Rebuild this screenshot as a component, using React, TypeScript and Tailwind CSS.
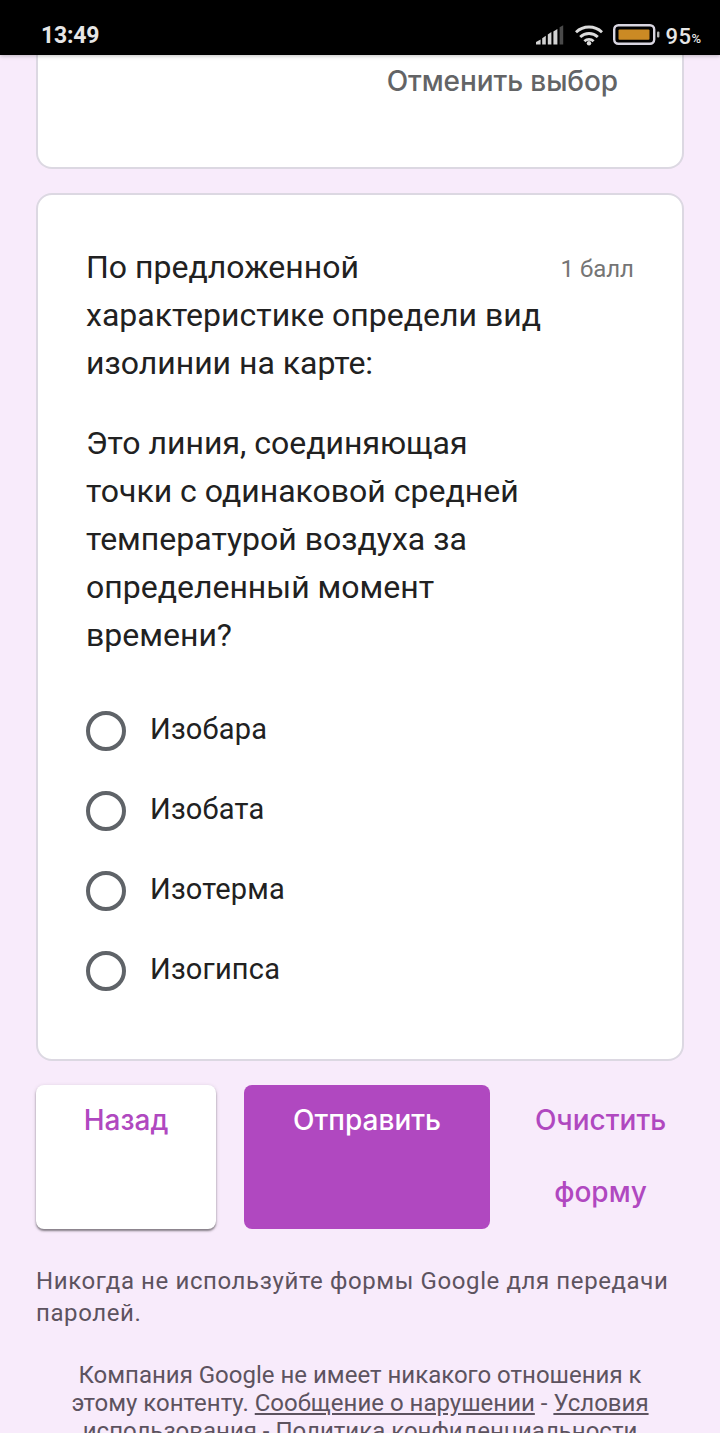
import * as React from "react";

const options = ["Изобара", "Изобата", "Изотерма", "Изогипса"];

function StatusBar() {
  return (
    <header className="relative flex h-[55px] shrink-0 items-start justify-between bg-black pl-[41px] pr-[19px] pt-[19px] text-[#e6e6e6] shadow-[0_1px_4px_rgba(0,0,0,0.25)]">
      <span className="pt-px text-[23px] font-bold leading-[32px] tracking-[-0.2px]">13:49</span>
      <div className="flex h-8 items-center">
        {/* Signal */}
        <svg width="28" height="20" viewBox="0 0 28 20" className="mr-[11px]">
          <path d="M0 19.5V17l4.6-2.6v5.1z" fill="#d2d2d2" />
          <path d="M6.2 19.5v-6.3l3.6-2.4v8.7z" fill="#d2d2d2" />
          <path d="M11.8 19.5V9.4L15.4 7v12.5z" fill="#d2d2d2" />
          <path d="M17.4 19.5v-13L21.4 4v15.5z" fill="#d2d2d2" />
          <path d="M23.6 19.5V2.2L27.2.3v19.2z" fill="#4a4a4a" />
        </svg>
        {/* Wi-Fi */}
        <svg
          width="28"
          height="21"
          viewBox="0 0 28 21"
          fill="none"
          stroke="#dcdcdc"
          strokeWidth="2.9"
          className="mr-[10px]"
        >
          <path d="M1 7.2a19 19 0 0 1 26 0" />
          <path d="M5.2 12a12.8 12.8 0 0 1 17.6 0" />
          <path d="M9.4 16.2a6.8 6.8 0 0 1 9.2 0" />
          <circle cx="14" cy="18.2" r="2.2" fill="#dcdcdc" stroke="none" />
        </svg>
        {/* Battery */}
        <svg width="47" height="22" viewBox="0 0 47 22" className="mr-[5px]">
          <rect x="1.2" y="1.2" width="40" height="18.6" rx="4.2" fill="none" stroke="#d8d5e0" strokeWidth="2.4" />
          <rect x="5.5" y="5.5" width="31" height="10.2" rx="1" fill="#cb8a24" />
          <rect x="44" y="7.5" width="2.4" height="6" rx="1" fill="#b5b5b5" />
        </svg>
        <span className="pt-[4px] text-[22px] font-medium leading-8 tracking-[0.5px]">95</span>
        <span className="pt-[7px] text-[13px] font-medium leading-8">%</span>
      </div>
    </header>
  );
}

function Option({ label }: { label: string }) {
  return (
    <label className="flex h-20 items-center">
      <span className="size-10 shrink-0 rounded-full border-4 border-[#5f6368]" />
      <span className="ml-6 pb-1 text-[29px] leading-10 tracking-[0.2px]">{label}</span>
    </label>
  );
}

export default function App() {
  return (
    <div className="flex h-[1433px] w-[720px] flex-col overflow-hidden bg-[#f8ebfb] font-['Roboto','Liberation_Sans',sans-serif] text-[#212121]">
      <StatusBar />

      <main className="flex flex-col px-9">
        {/* End of the previous question */}
        <section className="h-[114px] rounded-b-2xl border-2 border-t-0 border-[#dcd8e2] bg-white pr-[64px] text-right">
          <button className="font-['Inter','Roboto',sans-serif] text-[28px] font-medium leading-[52px] tracking-[-0.1px] text-[#636466]">
            Отменить выбор
          </button>
        </section>

        <section className="mt-6 flex h-[868px] flex-col rounded-2xl border-2 border-[#dcd8e2] bg-white px-12 pt-12">
          <div className="flex justify-between">
            <div className="text-[32px] leading-12">
              <p>
                По предложенной
                <br />
                характеристике определи вид
                <br />
                изолинии на карте:
              </p>
              <p className="mt-8">
                Это линия, соединяющая
                <br />
                точки с одинаковой средней
                <br />
                температурой воздуха за
                <br />
                определенный момент
                <br />
                времени?
              </p>
            </div>
            <span className="whitespace-nowrap pt-[10px] text-[24px] leading-8 text-[#757575]">
              1 балл
            </span>
          </div>

          <div className="mt-8 flex flex-col">
            {options.map((label) => (
              <Option key={label} label={label} />
            ))}
          </div>
        </section>

        <div className="mt-6 flex h-36 font-['Inter','Roboto',sans-serif] text-[28px] font-medium leading-[70px] text-[#b048c0]">
          <button className="flex w-[180px] items-start justify-center rounded-lg bg-white shadow-[0_2px_2px_rgba(0,0,0,0.4),0_1px_4px_rgba(0,0,0,0.15)]">
            Назад
          </button>
          <button className="ml-7 flex w-[246px] items-start justify-center rounded-lg bg-[#b048c0] text-white">
            Отправить
          </button>
          <button className="ml-[34px] flex w-[153px] flex-col items-center gap-[2px]">
            <span>Очистить</span>
            <span>форму</span>
          </button>
        </div>

        <p className="mt-9 whitespace-nowrap text-[24px] leading-8 tracking-[0.6px] text-[#5d535f]">
          Никогда не используйте формы Google для передачи
          <br />
          паролей.
        </p>

        <footer className="mt-8 whitespace-nowrap text-center text-[24px] leading-7 text-[#5d535f]">
          Компания Google не имеет никакого отношения к
          <br />
          этому контенту. <a className="underline">Сообщение о нарушении</a> - <a className="underline">Условия</a>
          <br />
          <a className="underline">использования</a> - <a className="underline">Политика конфиденциальности</a>
        </footer>
      </main>
    </div>
  );
}
